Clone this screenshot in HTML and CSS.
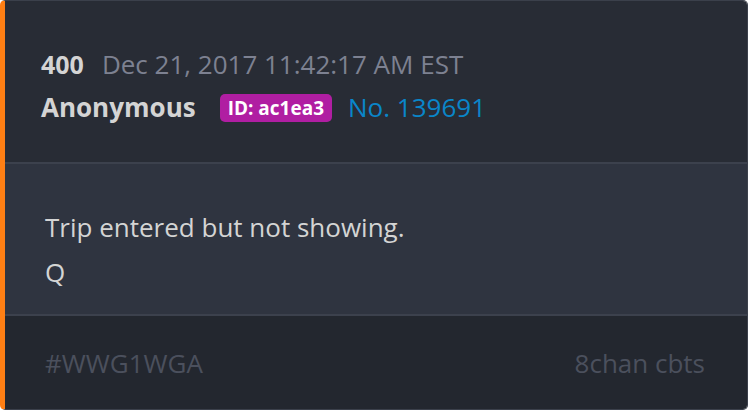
FILE: index.html
```html
<!DOCTYPE html>
<html lang="en">
<head>
    <meta charset="UTF-8">
    <meta name="viewport" content="width=device-width, initial-scale=1.0">
    <title>Post 400</title>
    <link rel="stylesheet" href="styles.css">
</head>
<body>
    <div class="post">
        <!-- post header -->
        <div class="post-header">
            <div class="post-line">
                <span class="post-num">400</span>
                <span class="post-date">Dec 21, 2017 11:42:17 AM EST</span>
            </div>
            <div class="post-line">
                <span class="post-name">Anonymous</span>
                <span class="post-id">ID: ac1ea3</span>
                <span class="post-no">No. 139691</span>
            </div>
        </div>
        <!-- post text -->
        <div class="post-body">
            <p>Trip entered but not showing.</p>
            <p>Q</p>
        </div>
        <!-- footer -->
        <div class="post-footer">
            <span>#WWG1WGA</span>
            <span>8chan cbts</span>
        </div>
    </div>
</body>
</html>
```

FILE: styles.css
```css
html, body {
    margin: 0;
    padding: 0;
    background-color: #ffffff;
}
body {
    font-family: 'Open Sans', 'Liberation Sans', sans-serif;
}
.post {
    width: 748px;
    height: 410px;
    box-sizing: border-box;
    border: 1px solid #3b404b;
    border-left: 5px solid #ff7f14; /* orange stripe */
    border-radius: 5px;
    display: flex;
    flex-direction: column;
    overflow: hidden;
}
.post-header {
    background-color: #282c35;
    height: 161px;
    box-sizing: border-box;
    padding: 42px 36px 0;
}
.post-line {
    display: flex;
    align-items: center;
    line-height: 43px;
    font-size: 26px;
}
.post-num {
    color: #d4d4d4;
    font-weight: bold;
    font-size: 25px;
    margin-right: 18px;
}
.post-date {
    color: #7d8191;
}
.post-name {
    color: #d4d4d4;
    font-weight: bold;
    margin-right: 24px;
}
.post-id {
    background-color: #b01ea2;
    color: #ffffff;
    font-weight: bold;
    font-size: 19px;
    line-height: 28px;
    padding: 0 8px;
    border-radius: 5px;
    margin-right: 16px;
}
.post-no {
    color: #0a86c9;
}
.post-body {
    background-color: #2f3440;
    border-top: 2px solid #3c414d;
    height: 152px;
    box-sizing: border-box;
    padding: 41px 40px 0;
}
.post-body p {
    margin: 0;
    color: #d4d4d4;
    font-size: 26px;
    line-height: 45px;
}
.post-footer {
    flex-grow: 1;
    background-color: #23272f;
    border-top: 2px solid #3c414d;
    display: flex;
    justify-content: space-between;
    padding: 32px 42px 0 40px;
    font-size: 26px;
    line-height: 30px;
    color: #4b505d;
}
```
